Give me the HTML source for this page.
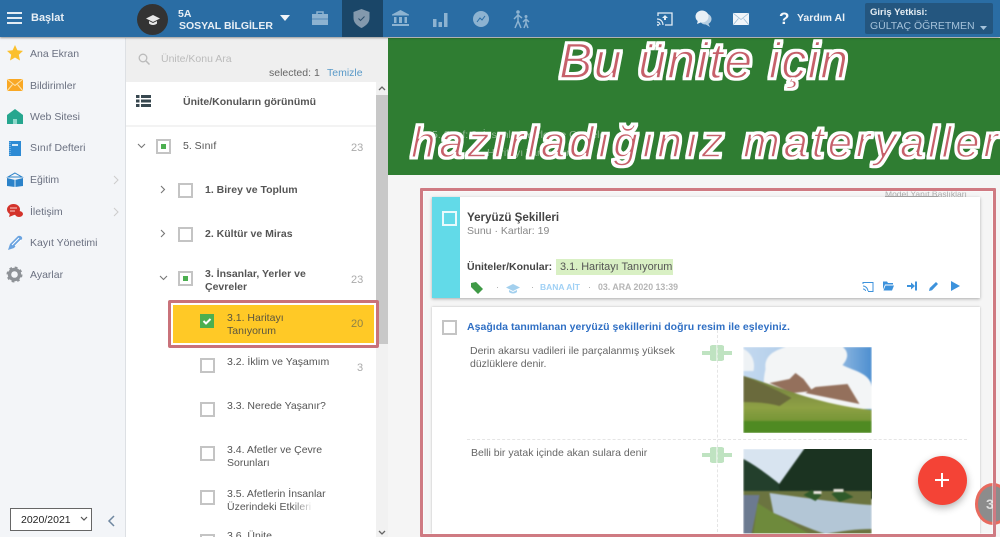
<!DOCTYPE html>
<html lang="tr"><head><meta charset="utf-8"><title>Başlat</title>
<style>
html,body{margin:0;padding:0;width:1000px;height:537px;overflow:hidden}
body{background:#f5f5f5;font-family:"Liberation Sans",sans-serif;color:#555}
#r{position:absolute;left:0;top:0;width:1000px;height:537px;overflow:hidden;filter:blur(.35px)}
.a,.a2{position:absolute;white-space:nowrap}
.a{font-size:10.5px;line-height:12px}
svg{position:absolute;overflow:visible}
.box{position:absolute;width:11px;height:11px;border:2px solid #c4c4c4;background:#fff}
.box.p::after{content:"";position:absolute;left:3px;top:3px;width:5px;height:5px;background:#4caf50}
.m{left:30px;color:#6a7080;font-size:10.5px}
.t{color:#555;font-size:10.5px;line-height:13px}
.b{font-weight:bold;color:#555}
.n{color:#aaa;font-size:11px}
</style></head><body><div id="r">

<!-- panels -->
<div class="a" style="left:0;top:38px;width:125px;height:499px;background:#f3f5f8"></div>
<div class="a" style="left:125px;top:38px;width:1px;height:499px;background:#dde0e4"></div>
<div class="a" style="left:126px;top:38px;width:262px;height:44px;background:#efefef"></div>
<div class="a" style="left:126px;top:82px;width:250px;height:455px;background:#fff"></div>
<div class="a" style="left:126px;top:125px;width:250px;height:2px;background:#f3f3f3"></div>
<div class="a" style="left:376px;top:82px;width:12px;height:455px;background:#f1f1f1"></div>
<div class="a" style="left:376px;top:95px;width:12px;height:249px;background:#c8c8c8"></div>
<svg style="left:376px;top:82px" width="12" height="455"><path d="M3 8l3-3 3 3M3 449l3 3 3-3" fill="none" stroke="#666" stroke-width="1.3"/></svg>

<!-- green banner -->
<div class="a" style="left:388px;top:38px;width:612px;height:137px;background:#2f7d32"></div>
<div class="a" style="left:432px;top:129px;color:#8fb691;font-size:10.5px">5. Sınıf: 3. İnsanlar, Yerler ve Cevreler</div>
<div class="a" style="left:487px;top:147px;color:#8fb691;font-size:10.5px">Haritayı Tanıyorum</div>

<!-- top bar -->
<div class="a" style="left:0;top:0;width:1000px;height:37px;background:#2a6da4;box-shadow:0 1px 2px rgba(0,0,0,.4)"></div>
<div class="a" style="left:342px;top:0;width:41px;height:37px;background:#1a4668"></div>
<div class="a" style="left:7px;top:12px;width:15px;height:2px;background:#e3ecf4;box-shadow:0 5px 0 #e3ecf4,0 10px 0 #e3ecf4"></div>
<div class="a" style="left:31px;top:12px;color:#e8eff5;font-size:11px;font-weight:bold">Başlat</div>
<div class="a" style="left:137px;top:4px;width:31px;height:31px;border-radius:50%;background:#333"></div>
<svg style="left:146px;top:14px" width="14" height="12"><path d="M7 1L14 4.500 7 8 0 4.500z" fill="#e8e8e8"/><path d="M3 7v2.500c2 2 6 2 8 0V7L7 9z" fill="#e8e8e8"/></svg>
<div class="a" style="left:178px;top:8px;color:#e8eff5;font-size:10.5px;font-weight:bold">5A</div>
<div class="a" style="left:179px;top:20px;color:#e8eff5;font-size:10.5px;font-weight:bold">SOSYAL BİLGİLER</div>
<svg style="left:280px;top:15px" width="10" height="6"><path d="M0 0h10L5 6z" fill="#f0f4f8"/></svg>
<svg style="left:311px;top:10px" width="18" height="17"><path d="M1 4h16v11H1z" fill="#8db3d1"/><path d="M6 4V2h6v2" fill="none" stroke="#8db3d1" stroke-width="1.5"/><path d="M1 9h16" stroke="#2a6da4" stroke-width=".6"/></svg>
<svg style="left:353px;top:9px" width="17" height="19"><path d="M8.500 0l8 3v6c0 5-4 8-8 10C4.500 17 .5 14 .5 9V3z" fill="#8399ad"/><path d="M5.500 9.500l2 2 4-4" fill="none" stroke="#2c4f6c" stroke-width="1"/></svg>
<svg style="left:392px;top:10px" width="17" height="17"><path d="M8.500 0L17 4.500v1H0v-1zM2 7h2.500v6H2zM7 7h3v6H7zM12.500 7H15v6h-2.500zM0 14h17v2H0z" fill="#8db3d1"/></svg>
<svg style="left:433px;top:13px" width="15" height="14"><path d="M0 6h3.500v8H0zM5.500 9H9v5H5.500zM11 0h3.500v14H11z" fill="#8db3d1"/></svg>
<svg style="left:473px;top:11px" width="16" height="16"><circle cx="8" cy="8" r="8" fill="#8db3d1"/><path d="M4 11l3-4 2 2 3-4" fill="none" stroke="#2a6da4" stroke-width="1"/></svg>
<svg style="left:512px;top:10px" width="18" height="19"><g fill="none" stroke="#8db3d1" stroke-width="1.5"><path d="M6 4v7l-3 7M6 11l3 7M2 9l4-4 4 3M14 9v4l-2 5M14 13l2 5M11 12l3-3 3 3"/></g><circle cx="6" cy="2" r="1.8" fill="#8db3d1"/><circle cx="14" cy="6.500" r="1.5" fill="#8db3d1"/></svg>
<svg style="left:657px;top:12px" width="16" height="14"><path d="M1 4V1h14v12H8" fill="none" stroke="#e3edf5" stroke-width="1.3"/><path d="M8 3l3 3H5zM7 6h2v2H7z" fill="#e3edf5"/><path d="M0 7c4 0 6 3 6 6M0 10c2 0 3 1.500 3 3" fill="none" stroke="#e3edf5" stroke-width="1.2"/><circle cx="1" cy="13" r="1" fill="#e3edf5"/></svg>
<svg style="left:695px;top:10px" width="17" height="17"><ellipse cx="10.500" cy="9" rx="6" ry="5.500" fill="#b7cfe2"/><path d="M13 13l2 4-5-3z" fill="#b7cfe2"/><ellipse cx="7" cy="6.500" rx="6.500" ry="6" fill="#e8f0f6"/><path d="M3 10l-1 4 5-2z" fill="#e8f0f6"/></svg>
<svg style="left:733px;top:13px" width="16" height="12"><path d="M0 0h16v12H0z" fill="#f0f5f9"/><path d="M0 0l8 6.500L16 0M0 12l5.500-6.500M16 12l-5.500-6.500" fill="none" stroke="#9dbdd6" stroke-width=".8"/></svg>
<div class="a" style="left:779px;top:10px;color:#f4f7fa;font-size:17px;line-height:18px;font-weight:bold">?</div>
<div class="a" style="left:797px;top:12px;color:#eaf0f5;font-size:10.5px;font-weight:bold">Yardım Al</div>
<div class="a" style="left:865px;top:3px;width:128px;height:31px;background:#24567f;border-radius:2px"></div>
<div class="a" style="left:870px;top:7px;color:#e5edf3;font-size:9.5px;font-weight:bold">Giriş Yetkisi:</div>
<div class="a" style="left:870px;top:20px;color:#a5c2da;font-size:10.5px">GÜLTAÇ ÖĞRETMEN</div>
<svg style="left:980px;top:26px" width="7" height="4"><path d="M0 0h7L3.500 4z" fill="#a5c2da"/></svg>

<!-- sidebar -->
<svg style="left:7px;top:45px" width="16" height="16"><path d="M8 0l2.400 5.300 5.600.6-4.200 3.800 1.200 5.800L8 12.500 3 15.500l1.200-5.800L0 5.900l5.600-.6z" fill="#fbc02d"/></svg>
<div class="a m" style="top:48px">Ana Ekran</div>
<svg style="left:7px;top:79px" width="16" height="12"><path d="M0 0h16v12H0z" fill="#f9a825"/><path d="M0 0l8 6.500L16 0M0 12l5.500-6.500M16 12l-5.500-6.500" fill="none" stroke="#fde4b0" stroke-width="1"/></svg>
<div class="a m" style="top:80px">Bildirimler</div>
<svg style="left:7px;top:109px" width="16" height="15"><path d="M8 0l8 6v9H0V6z" fill="#26a68f"/><path d="M6 15v-5h4v5z" fill="#8fd8cb"/></svg>
<div class="a m" style="top:111px">Web Sitesi</div>
<svg style="left:9px;top:141px" width="12" height="15"><path d="M0 0h12v15H0z" fill="#2d8ad4"/><path d="M3 3h6v2H3z" fill="#d5e9f8"/><path d="M1 1v13" stroke="#9fcdf0" stroke-dasharray="1 1"/></svg>
<div class="a m" style="top:142px">Sınıf Defteri</div>
<svg style="left:7px;top:172px" width="16" height="15"><path d="M8 1l7 4H1z" fill="none" stroke="#2b82c9"/><path d="M0 6l8 2 8-2v8l-8 1-8-1z" fill="#2b82c9"/><path d="M8 8v7" stroke="#d5e9f8"/></svg>
<div class="a m" style="top:174px">Eğitim</div>
<svg style="left:113px;top:175px" width="6" height="10"><path d="M1 1l4 4-4 4" fill="none" stroke="#ccc"/></svg>
<svg style="left:7px;top:204px" width="16" height="15"><ellipse cx="6.500" cy="5.500" rx="6.500" ry="5.500" fill="#d3332b"/><path d="M3 9l-1 4 5-2z" fill="#d3332b"/><ellipse cx="12" cy="10" rx="4" ry="3" fill="#d3332b"/><path d="M3 4h7M3 7h5" stroke="#f8d0cd"/></svg>
<div class="a m" style="top:206px">İletişim</div>
<svg style="left:113px;top:207px" width="6" height="10"><path d="M1 1l4 4-4 4" fill="none" stroke="#ccc"/></svg>
<svg style="left:7px;top:235px" width="16" height="16"><path d="M1 15l2-6L11 1c2-1 5 1 4 3L7 13z" fill="#6aa3e0"/><path d="M5 10l7-7M8 11l6-6" stroke="#fff"/></svg>
<div class="a m" style="top:237px">Kayıt Yönetimi</div>
<svg style="left:7px;top:267px" width="15" height="15"><circle cx="7.500" cy="7.500" r="5" fill="none" stroke="#8e9297" stroke-width="3.400"/><circle cx="7.500" cy="7.500" r="7" fill="none" stroke="#8e9297" stroke-width="2" stroke-dasharray="2.700 2.800"/></svg>
<div class="a m" style="top:269px">Ayarlar</div>
<div class="a" style="left:10px;top:508px;width:80px;height:21px;border:1px solid #666;background:#fff"></div>
<div class="a" style="left:21px;top:514px;color:#222;font-size:10.5px">2020/2021</div>
<svg style="left:80px;top:516px" width="8" height="5"><path d="M1 1l3 3 3-3" fill="none" stroke="#555" stroke-width="1.2"/></svg>
<svg style="left:107px;top:515px" width="8" height="12"><path d="M7 1L2 6l5 5" fill="none" stroke="#6f87a0" stroke-width="1.5"/></svg>

<!-- search -->
<svg style="left:138px;top:53px" width="12" height="12"><circle cx="5" cy="5" r="3.800" fill="none" stroke="#bbb" stroke-width="1.3"/><path d="M8 8l3.500 3.500" stroke="#bbb" stroke-width="1.5"/></svg>
<div class="a" style="left:161px;top:53px;color:#bbb;font-size:10.5px">Ünite/Konu Ara</div>
<div class="a" style="left:269px;top:67px;color:#666;font-size:10.5px">selected: 1</div>
<div class="a" style="left:327px;top:67px;color:#5a9ac8;font-size:10.5px">Temizle</div>
<svg style="left:136px;top:95px" width="15" height="12"><path d="M0 0h3.500v3H0zM5 0h10v3H5zM0 4.500h3.500v3H0zM5 4.500h10v3H5zM0 9h3.500v3H0zM5 9h10v3H5z" fill="#37474f"/></svg>
<div class="a" style="left:183px;top:96px;color:#555;font-size:10.5px;font-weight:bold">Ünite/Konuların görünümü</div>

<!-- tree -->
<svg style="left:137px;top:143px" width="9" height="6"><path d="M1 1l3.500 3.500L8 1" fill="none" stroke="#777" stroke-width="1.1"/></svg>
<div class="box p" style="left:156px;top:139px"></div>
<div class="a t" style="left:183px;top:140px">5. Sınıf</div><div class="a n" style="left:351px;top:142px">23</div>
<svg style="left:160px;top:185px" width="6" height="9"><path d="M1 1l3.500 3.500L1 8" fill="none" stroke="#777" stroke-width="1.1"/></svg>
<div class="box" style="left:178px;top:183px"></div>
<div class="a t b" style="left:205px;top:184px">1. Birey ve Toplum</div>
<svg style="left:160px;top:229px" width="6" height="9"><path d="M1 1l3.500 3.500L1 8" fill="none" stroke="#777" stroke-width="1.1"/></svg>
<div class="box" style="left:178px;top:227px"></div>
<div class="a t b" style="left:205px;top:228px">2. Kültür ve Miras</div>
<svg style="left:159px;top:275px" width="9" height="6"><path d="M1 1l3.500 3.500L8 1" fill="none" stroke="#777" stroke-width="1.1"/></svg>
<div class="box p" style="left:178px;top:271px"></div>
<div class="a t b" style="left:205px;top:268px">3. İnsanlar, Yerler ve<br>Çevreler</div><div class="a n" style="left:351px;top:274px">23</div>

<div class="a" style="left:168px;top:300px;width:205px;height:42px;border:3px solid #c9727a;border-radius:2px;background:#ffc926;outline:2px solid #fff;outline-offset:-5px"></div>
<div class="a" style="left:200px;top:314px;width:14px;height:14px;background:#4caf50"></div>
<svg style="left:200px;top:314px" width="14" height="14"><path d="M3.500 7l2.500 2.500 4.500-4.500" fill="none" stroke="#fff" stroke-width="2"/></svg>
<div class="a t" style="left:227px;top:312px;color:#5a5540">3.1. Haritayı<br>Tanıyorum</div><div class="a n" style="left:351px;top:318px;color:#8e8248">20</div>

<div class="box" style="left:200px;top:358px"></div>
<div class="a t" style="left:227px;top:356px">3.2. İklim ve Yaşamım</div><div class="a n" style="left:357px;top:362px">3</div>
<div class="box" style="left:200px;top:402px"></div>
<div class="a t" style="left:227px;top:400px">3.3. Nerede Yaşanır?</div>
<div class="box" style="left:200px;top:446px"></div>
<div class="a t" style="left:227px;top:444px">3.4. Afetler ve Çevre<br>Sorunları</div>
<div class="box" style="left:200px;top:490px"></div>
<div class="a t" style="left:227px;top:488px">3.5. Afetlerin İnsanlar<br>Üzerindeki Etkileri</div>
<div class="a" style="left:292px;top:500px;width:22px;height:14px;background:linear-gradient(90deg,rgba(255,255,255,0),#fff)"></div>
<div class="box" style="left:200px;top:534px"></div>
<div class="a t" style="left:227px;top:530px">3.6. Ünite</div>

<!-- main content -->
<div class="a" style="left:885px;top:188px;color:#aaa;font-size:8.5px;width:95px;overflow:hidden">Model Yanıt Başlıkları</div>
<div class="a" style="left:885px;top:196px;width:53px;height:1px;background:#aaa"></div>
<div class="a" style="left:432px;top:197px;width:548px;height:101px;background:#fff;box-shadow:0 1px 3px rgba(0,0,0,.3)"></div>
<div class="a" style="left:432px;top:197px;width:28px;height:101px;background:#62dae8"></div>
<div class="a" style="left:442px;top:211px;width:11px;height:11px;border:2px solid #e8fafc"></div>
<div class="a" style="left:467px;top:211px;color:#444;font-size:11.6px;font-weight:bold;line-height:14px">Yeryüzü Şekilleri</div>
<div class="a" style="left:467px;top:225px;color:#888;font-size:10.5px">Sunu · Kartlar: 19</div>
<div class="a" style="left:467px;top:261px;color:#444;font-size:10.5px;font-weight:bold">Üniteler/Konular:</div>
<div class="a" style="left:556px;top:259px;width:113px;padding-left:4px;height:16px;line-height:16px;background:#d9f0c4;color:#555;font-size:10.9px">3.1. Haritayı Tanıyorum</div>
<svg style="left:471px;top:282px" width="12" height="12"><path d="M0 1l5-1 7 7-5 5-7-7z" fill="#3f9a46"/></svg>
<div class="a" style="left:496px;top:281px;color:#aaa;font-size:9px">·</div>
<svg style="left:503px;top:283px" width="21" height="12"><path d="M10 1l7 3.500-7 3.500-7-3.500z" fill="#a3d0ee"/><path d="M6 7v2c2 2 6 2 8 0V7l-4 2z" fill="#a3d0ee"/></svg>
<div class="a" style="left:531px;top:281px;color:#aaa;font-size:9px">·</div>
<div class="a" style="left:540px;top:281px;color:#9fd0f5;font-size:8.5px;font-weight:bold">BANA AİT</div>
<div class="a" style="left:588px;top:281px;color:#aaa;font-size:9px">·</div>
<div class="a" style="left:598px;top:281px;color:#b5b5b5;font-size:8.8px;font-weight:bold">03. ARA 2020 13:39</div>
<svg style="left:815px;top:280px" width="150" height="14" fill="#3c92dc">
<path d="M48 4V2.500h10v9h-5M48 6c3 0 5 3 5 5M48 9c1.500 0 2.500 1 2.500 2" fill="none" stroke="#3c92dc"/>
<path d="M68 1.500h4l1 1.500h5v1.500H70l-2 5zM70.500 5.500H79l-2 5H68.500z"/>
<path d="M92 5h4V2.500L100 6l-4 3.500V7h-4zM100 1.500h2v9h-2z"/>
<path d="M114 11l.7-3L121 2l2 2-6 6.300z"/>
<path d="M136 1l9 5-9 5z"/></svg>

<div class="a" style="left:432px;top:307px;width:548px;height:230px;background:#fff;box-shadow:0 0 2px rgba(0,0,0,.25)"></div>
<div class="box" style="left:442px;top:320px"></div>
<div class="a" style="left:467px;top:321px;color:#2f6fc4;font-size:10.5px;font-weight:bold;letter-spacing:.03px">Aşağıda tanımlanan yeryüzü şekillerini doğru resim ile eşleyiniz.</div>
<div class="a t" style="left:470px;top:345px;color:#666;font-size:10.5px">Derin akarsu vadileri ile parçalanmış yüksek<br>düzlüklere denir.</div>
<div class="a t" style="left:471px;top:447px;color:#666;font-size:10.5px">Belli bir yatak içinde akan sulara denir</div>
<div class="a" style="left:717px;top:330px;width:0;height:207px;border-left:1px dashed #e5e5e5"></div>
<div class="a" style="left:467px;top:439px;width:500px;height:0;border-top:1px dashed #e5e5e5"></div>
<svg style="left:702px;top:344px" width="30" height="18" fill="#bfe3c1"><path d="M0 7h8V2l2-1h4.500v16H10l-2-1v-5H0zM15.500 1H20l2 1v5h8v4h-8v5l-2 1h-4.500z"/></svg>
<svg style="left:702px;top:446px" width="30" height="18" fill="#bfe3c1"><path d="M0 7h8V2l2-1h4.500v16H10l-2-1v-5H0zM15.500 1H20l2 1v5h8v4h-8v5l-2 1h-4.500z"/></svg>

<!-- photo 1 -->
<svg style="left:743px;top:347px;overflow:hidden" width="129" height="86" viewBox="0 0 128 86">
<defs><linearGradient id="s1" x1="0" y1="0" x2="1" y2="0"><stop offset="0" stop-color="#c4d9ef"/><stop offset=".7" stop-color="#9dc0e4"/><stop offset="1" stop-color="#4d8fd0"/></linearGradient>
<linearGradient id="g1" x1="0" y1="0" x2="0" y2="1"><stop offset="0" stop-color="#6e7a3e"/><stop offset=".55" stop-color="#8ea044"/><stop offset="1" stop-color="#5e8c28"/></linearGradient></defs>
<g style="filter:blur(.9px)">
<rect width="128" height="86" fill="url(#s1)"/>
<path d="M22 22C20 6 35-4 85-4c15 0 25 10 14 22 8 5 29 8 29 22v22H40C20 50 18 40 22 22z" fill="#f3f5f6"/>
<path d="M0 2c8 4 12 12 10 22H0z" fill="#eef2f5"/>
<path d="M26 36l20-4 6-6 8 6 9 12-20 2zM62 46l10-6 32-3 12 20z" fill="#94705c"/>
<path d="M0 29c30 8 70 28 128 34v23H0z" fill="url(#g1)"/>
<path d="M0 29c12 5 30 12 48 22l-12 8c-10-3-24-4-36-4z" fill="#6a6a3c"/>
<rect y="74" width="128" height="12" fill="#4f8a22"/>
</g></svg>
<!-- photo 2 -->
<svg style="left:743px;top:449px;overflow:hidden" width="129" height="85" viewBox="0 0 128 85">
<g style="filter:blur(.8px)">
<rect width="128" height="85" fill="#d8e4f0"/>
<path d="M0 10c15 8 30 20 42 30v14H0z" fill="#233f2c"/>
<path d="M35 36L62-2h70v52H38z" fill="#1b3321"/>
<rect y="42" width="128" height="43" fill="#6b7440"/>
<path d="M26 44c30 4 70 10 102 12v24c-15 0-30 2-46 5C60 78 36 66 30 64z" fill="#b3c6d6"/>
<path d="M0 46h16L8 85H0z" fill="#6c7a90"/>
<path d="M14 54l16 10 36 21H10z" fill="#6e8a3c"/>
<path d="M60 46l8-5 10 5-6 6zM88 45l8-5 14 8-14 5z" fill="#2f5a2a"/>
<path d="M70 42h8v3h-8zM90 40h10v3H90z" fill="#e8e4dc"/>
</g></svg>

<!-- fab -->
<div class="a" style="left:975px;top:483px;width:36px;height:42px;border-radius:50%;background:#8c8c8c;border:3px solid #e86a5e;box-sizing:border-box;color:#ddd;font-size:14px;font-weight:bold;line-height:36px;padding-left:8px">3</div>
<div class="a" style="left:918px;top:456px;width:49px;height:49px;border-radius:50%;background:#f44336;box-shadow:0 3px 8px rgba(0,0,0,.3)"></div>
<div class="a" style="left:935px;top:479px;width:14px;height:2px;background:#fff"></div>
<div class="a" style="left:941px;top:473px;width:2px;height:14px;background:#fff"></div>

<!-- main red frame -->
<div class="a" style="left:420px;top:188px;width:570px;height:343px;border:3px solid #cf7a82;border-radius:1px;box-shadow:inset 0 0 0 1px rgba(255,255,255,.5)"></div>

<!-- overlay headline -->
<svg style="left:388px;top:30px" width="612" height="160">
<defs><filter id="o" x="-5%" y="-30%" width="110%" height="160%">
<feMorphology in="SourceAlpha" operator="dilate" radius="1.6" result="d"/>
<feFlood flood-color="#fff"/><feComposite in2="d" operator="in" result="w"/>
<feMerge><feMergeNode in="w"/><feMergeNode in="SourceGraphic"/></feMerge></filter></defs>
<g font-family="'Liberation Sans',sans-serif" font-style="italic" fill="#c6606b" stroke="#fff" stroke-width="1.5" filter="url(#o)">
<text x="171" y="48" font-size="50" textLength="289" lengthAdjust="spacing">Bu ünite için</text>
<text x="23" y="127" font-size="44" textLength="587" lengthAdjust="spacing">hazırladığınız materyaller</text>
</g></svg>

</div></body></html>
